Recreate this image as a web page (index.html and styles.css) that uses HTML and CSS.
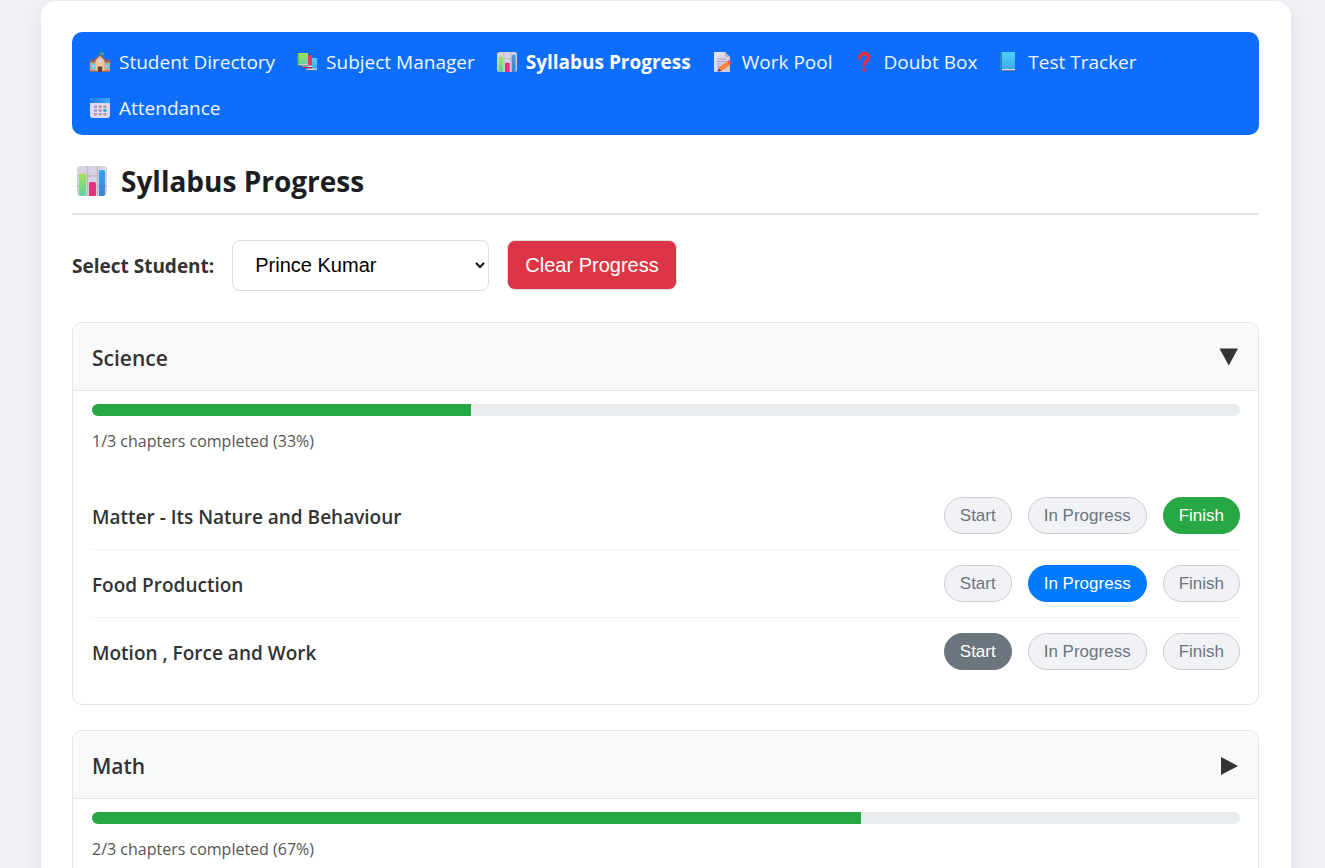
FILE: index.html
```html
<!DOCTYPE html>
<html lang="en">
<head>
<meta charset="utf-8">
<title>Syllabus Progress</title>
<link rel="stylesheet" href="styles.css">
</head>
<body>
<svg class="defs" width="0" height="0" aria-hidden="true">
  <defs>
    <linearGradient id="green" x1="0" y1="0" x2="0" y2="1"><stop offset="0" stop-color="#a6e255"/><stop offset="1" stop-color="#5fd3a0"/></linearGradient>
    <linearGradient id="blue" x1="0" y1="0" x2="0" y2="1"><stop offset="0" stop-color="#35a4f5"/><stop offset="1" stop-color="#3c7fd0"/></linearGradient>
    <linearGradient id="sky" x1="0" y1="0" x2="0" y2="1"><stop offset="0" stop-color="#4fd0f8"/><stop offset="1" stop-color="#3fa9ea"/></linearGradient>
    <linearGradient id="paper" x1="0" y1="0" x2="1" y2="1"><stop offset="0" stop-color="#e9e2ee"/><stop offset="1" stop-color="#cfc8da"/></linearGradient>
    <linearGradient id="red" x1="0" y1="0" x2="0" y2="1"><stop offset="0" stop-color="#f8312f"/><stop offset="1" stop-color="#d92a5c"/></linearGradient>
    <linearGradient id="cal" x1="0" y1="0" x2="1" y2="0"><stop offset="0" stop-color="#1f7fe0"/><stop offset="1" stop-color="#3aa5fa"/></linearGradient>
    <symbol id="chart" viewBox="0 0 30 30">
      <rect width="30" height="30" rx="4" fill="#d9d2e0"/>
      <path d="M10.500 0v30M20.500 0v30M0 10h30M0 20h30" stroke="#bfb7ca" stroke-width="1.300"/>
      <path d="M2 9q0-1.500 1.500-1.500h4q1.500 0 1.500 1.500v21H4q-2 0-2-2z" fill="url(#green)"/>
      <path d="M12 17.500q0-1.500 1.500-1.500h4q1.500 0 1.500 1.500V30h-7z" fill="#e5307a"/>
      <path d="M22 5.500Q22 4 23.500 4h3Q28 4 28 5.500V28q0 2-2 2h-4z" fill="url(#blue)"/>
    </symbol>
    <symbol id="school" viewBox="0 0 20 20">
      <path d="M9.500 0h1v4h-1z" fill="#8a5a55"/>
      <path d="M10.500 0l4 .8-1 1 .5 1.200h-3.500z" fill="#24b67c"/>
      <path d="M0 9.500h20V20H0z" fill="#dba372"/>
      <path d="M0 7.500h20v3H0z" fill="#93615b"/>
      <path d="M1.500 11.500h3.700v5.500H1.500zM14.800 11.500h3.700v5.500h-3.700z" fill="#50c5ef"/>
      <path d="M3.200 11.500v5.500M16.600 11.500v5.500M1.500 14h3.500M15 14h3.500" stroke="#d8edf6" stroke-width=".5"/>
      <path d="M5.500 7.500L10 3.500l4.500 4V20h-9z" fill="#f3c78f"/>
      <path d="M4.500 8.500L10 3l5.500 5.500" fill="none" stroke="#93615b" stroke-width="1.300"/>
      <circle cx="10" cy="9" r="2.300" fill="#f5eef9" stroke="#a88b90" stroke-width=".4"/>
      <path d="M10 7.500V9l1 .8" stroke="#5c4a55" stroke-width=".5" fill="none"/>
      <path d="M7.800 14.500h4.400V20H7.800z" fill="#634143"/>
      <path d="M0 18.800h7.800V20H0zM12.200 18.800H20V20h-7.800z" fill="#8b6a68"/>
    </symbol>
    <symbol id="books" viewBox="0 0 20 20">
      <path d="M12 6h8v12h-8z" fill="url(#sky)"/><path d="M9 16.500h11v2.500H10z" fill="#d3cce0"/><path d="M9.500 18h10.500v1H10z" fill="#2b70bd"/>
      <path d="M6 3h9v11.500H6z" fill="#e83567"/><path d="M5 13.500h10V16H6z" fill="#d3cce0"/><path d="M5 15h10v1.200H6z" fill="#b52363"/>
      <path d="M1 1h10v11H1z" fill="url(#green)"/><path d="M0 2.500Q0 1 1.500 1v13.500Q0 14.500 0 13z" fill="#3e9a61"/><path d="M1.500 12H11v1.500H1.500z" fill="#d3cce0"/><path d="M1 13.500h10v1H1z" fill="#348859"/>
    </symbol>
    <symbol id="memo" viewBox="0 0 20 20">
      <path d="M2 0h10l5 5v15H2q-1 0-1-1V1q0-1 1-1z" fill="url(#paper)"/>
      <path d="M12 0l5 5h-4q-1 0-1-1z" fill="#b4abc4"/>
      <path d="M4 7h9M4 9.500h9M4 12h6M4 14.500h4" stroke="#aaa1b6" stroke-width="1"/>
      <path d="M5.500 16L14 9.500l3 3.500-8.500 6z" fill="#fa8534"/><path d="M14 9.500l1.800-1.500 3 3.600L17 13z" fill="#ef5263"/><path d="M5.500 16l3 3-4 .8z" fill="#6b4550"/>
    </symbol>
    <symbol id="question" viewBox="0 0 20 20">
      <path d="M5.500 6.500C5.500 0 14.800 0 14.500 5.500 14.300 9.500 10 9 10 13.500" fill="none" stroke="url(#red)" stroke-width="3.300" stroke-linecap="round"/>
      <circle cx="10" cy="18" r="1.900" fill="#e12b54"/>
    </symbol>
    <symbol id="book" viewBox="0 0 20 20">
      <path d="M3 0h13v17H3z" fill="url(#sky)"/><path d="M1 1.500Q1 0 3 0v19.500q-2 0-2-1.500z" fill="#2588c4"/><path d="M3 17h13v1.500H3z" fill="#e2d9ea"/><path d="M2 18.500h14v1H2z" fill="#315d9d"/>
    </symbol>
    <symbol id="calendar" viewBox="0 0 20 20">
      <rect width="20" height="20" rx="3" fill="#e3d9ef"/>
      <path d="M0 5V3q0-3 3-3h14q3 0 3 3v2z" fill="url(#cal)"/>
      <path d="M4 7.500h3v2.500H4zM8.700 7.500h3V10h-3zM13.400 7.500h3V10h-3zM4 11.200h3v2.500H4zM8.700 11.200h3v2.500h-3zM4 15h3v2.500H4zM8.700 15h3v2.500h-3zM13.400 15h3v2.500h-3z" fill="#a69cb3"/>
      <path d="M13.400 11.200h3v2.500h-3z" fill="#268de8"/>
    </symbol>
  </defs>
</svg>
<main class="container">
  <nav class="navbar">
    <a href="#"><svg class="icon"><use href="#school"/></svg>Student Directory</a>
    <a href="#"><svg class="icon"><use href="#books"/></svg>Subject Manager</a>
    <a href="#" class="current"><svg class="icon"><use href="#chart"/></svg>Syllabus Progress</a>
    <a href="#"><svg class="icon"><use href="#memo"/></svg>Work Pool</a>
    <a href="#"><svg class="icon"><use href="#question"/></svg>Doubt Box</a>
    <a href="#"><svg class="icon"><use href="#book"/></svg>Test Tracker</a>
    <a href="#"><svg class="icon"><use href="#calendar"/></svg>Attendance</a>
  </nav>

  <h1 class="title"><svg class="title-icon"><use href="#chart"/></svg>Syllabus Progress</h1>

  <div class="controls">
    <label for="student">Select Student:</label>
    <select id="student"><option>Prince Kumar</option></select>
    <button type="button" class="clear">Clear Progress</button>
  </div>

  <section class="card">
    <header class="card-header">
      <h2>Science</h2>
      <button type="button" class="toggle" aria-label="Collapse Science"><svg viewBox="0 0 20 20"><path d="M.5 1.500h18.500L9.750 18.500z"/></svg></button>
    </header>
    <div class="summary">
      <div class="track"><div class="fill" style="width:33%"></div></div>
      <p>1/3 chapters completed (33%)</p>
    </div>
    <ul class="chapters">
      <li><span class="name">Matter - Its Nature and Behaviour</span>
        <div class="states"><button type="button">Start</button><button type="button">In Progress</button><button type="button" class="finish">Finish</button></div></li>
      <li><span class="name">Food Production</span>
        <div class="states"><button type="button">Start</button><button type="button" class="progress">In Progress</button><button type="button">Finish</button></div></li>
      <li><span class="name">Motion , Force and Work</span>
        <div class="states"><button type="button" class="start">Start</button><button type="button">In Progress</button><button type="button">Finish</button></div></li>
    </ul>
  </section>

  <section class="card">
    <header class="card-header">
      <h2>Math</h2>
      <button type="button" class="toggle" aria-label="Expand Math"><svg viewBox="0 0 20 20"><path d="M2 2v18l17-9z"/></svg></button>
    </header>
    <div class="summary">
      <div class="track"><div class="fill" style="width:67%"></div></div>
      <p>2/3 chapters completed (67%)</p>
    </div>
  </section>
</main>
</body>
</html>
```
FILE: styles.css
```css
* { box-sizing: border-box; }

html { height: 100%; overflow: hidden; }

body {
  height: 100%;
  margin: 0;
  padding: 1px 34px 0 41px;
  overflow: hidden;
  background: #f0f2f7;
  color: #333;
  font-family: "Segoe UI", "Open Sans", "Noto Sans", sans-serif;
}

.defs { position: absolute; }

.container {
  min-height: 100%;
  padding: 31px 32px 31px 31px;
  background: #fff;
  border-radius: 15px;
  box-shadow: 0 5px 25px rgba(0, 0, 0, 0.08);
}

.navbar {
  display: flex;
  flex-wrap: wrap;
  gap: 16px 22px;
  padding: 15px 18px 12px;
  background: #0d6efd;
  border-radius: 10px;
}

.navbar a {
  display: flex;
  align-items: center;
  gap: 9px;
  color: #f0f6ff;
  font-size: 19px;
  line-height: 30px;
  text-decoration: none;
  white-space: nowrap;
}

.navbar .current { color: #fff; font-weight: 700; }

.icon { width: 20px; height: 20px; }

.title {
  display: flex;
  align-items: center;
  gap: 14px;
  margin: 26px 0 25px;
  padding: 0 0 12px 5px;
  border-bottom: 2px solid #e2e4ea;
  color: #1c1e21;
  font-size: 28px;
  line-height: 40px;
}

.title-icon { width: 30px; height: 30px; }

.controls {
  display: flex;
  align-items: flex-start;
  gap: 18px;
  margin-bottom: 31px;
}

.controls label { font-size: 19px; font-weight: 700; line-height: 53px; height: 51px; }

.controls select {
  width: 257px;
  height: 51px;
  padding: 0 18px 2px;
  border: 1px solid #ddd;
  border-radius: 8px;
  background: #fff;
  color: #000;
  font: 20px "Liberation Sans", Arial, sans-serif;
}

.clear {
  height: 50px;
  padding: 0 17px;
  border: 1px solid #ddd;
  border-radius: 8px;
  background: #dc3545;
  color: #fff;
  font: 20px "Liberation Sans", Arial, sans-serif;
}

.card {
  margin-bottom: 25px;
  border: 1px solid #e2e4ea;
  border-radius: 10px;
  overflow: hidden;
}

.card-header {
  display: flex;
  align-items: center;
  justify-content: space-between;
  height: 68px;
  padding: 0 19px;
  border-bottom: 1px solid #e2e4ea;
  background: #f8f9fb;
}

.card-header h2 { margin: 0; padding-top: 2px; font-size: 21px; font-weight: 600; }

.toggle { display: flex; padding: 0; border: 0; background: none; }
.toggle svg { width: 20px; height: 20px; fill: #333; }

.summary { padding: 13px 18px 29px; }

.track {
  height: 12px;
  border-radius: 6px;
  background: #e9ecef;
  overflow: hidden;
}

.fill { height: 100%; background: #28a745; }

.summary p { margin: 13px 0 0; color: #555; font-size: 16px; line-height: 24px; }

.summary, .chapters { padding-left: 19px; padding-right: 18px; }

.chapters { margin: 0; padding-top: 0; padding-bottom: 19px; list-style: none; }

.chapters li {
  display: flex;
  align-items: center;
  justify-content: space-between;
  padding: 15px 0;
  border-bottom: 1px solid #f0f2f5;
}

.chapters li:last-child { border-bottom: 0; }

.name { padding-top: 2px; font-size: 19px; font-weight: 600; }

.states { display: flex; gap: 16px; }

.states button {
  height: 37px;
  padding: 0 15px;
  border: 1px solid #ccc;
  border-radius: 19px;
  background: #f0f2f5;
  color: #6c757d;
  font: 17px "Liberation Sans", Arial, sans-serif;
}

.states .start { border-color: #6c757d; background: #6c757d; color: #fff; }
.states .progress { border-color: #007bff; background: #007bff; color: #fff; }
.states .finish { border-color: #28a745; background: #28a745; color: #fff; }
```
